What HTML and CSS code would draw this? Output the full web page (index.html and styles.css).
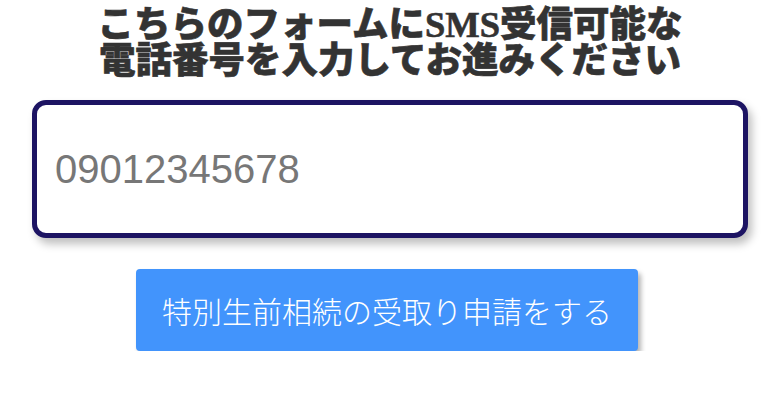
FILE: index.html
```html
<!DOCTYPE html>
<html lang="ja">
  <head>
    <meta charset="UTF-8" />
    <title>SMS認証</title>
    <meta name="viewport" content="width=device-width, initial-scale=1.0" />
    <link rel="stylesheet" href="styles.css">
  </head>
  <body>
    <h1 class="title">こちらのフォームにSMS受信可能な<br />電話番号を入力してお進みください</h1>

    <!-- Phone number entry -->
    <form class="sms-form">
      <input class="tel-input" type="tel" name="tel" placeholder="09012345678" />
      <button class="submit-btn" type="submit">特別生前相続の受取り申請をする</button>
    </form>
  </body>
</html>
```

FILE: styles.css
```css
/* General Styling */
body {
  margin: 0;
  padding: 7px 32px 0;
  background-color: #fff;
  font-family: "Noto Sans CJK JP", "Noto Sans", sans-serif;
}
.title {
  margin: 0;
  text-align: center;
  font-family: "Liberation Serif", "Noto Sans CJK JP", serif;
  font-weight: 900;
  font-size: 36.5px;
  line-height: 36px;
  color: #333;
  -webkit-text-stroke: 0.6px #333;
}

/* Form Styling */
.sms-form {
  display: flex;
  flex-direction: column;
  align-items: center;
  margin-top: 21px;
}
.tel-input {
  width: 100%;
  height: 138px;
  box-sizing: border-box;
  padding: 0 18px;
  border: 5px solid #1d1463;
  border-radius: 14px;
  box-shadow: 4px 6px 8px rgba(0, 0, 0, 0.25);
  font-family: "Liberation Sans", Arial, sans-serif;
  font-size: 40px;
  color: #333;
  outline: none;
}
.tel-input::placeholder {
  color: #777;
}
.submit-btn {
  margin: 31px 6px 0 0;
  width: 502px;
  height: 82px;
  background-color: #4294fc;
  color: #fff;
  border: none;
  border-radius: 4px;
  box-shadow: 3px 4px 5px rgba(0, 0, 0, 0.3);
  font-family: "Noto Sans CJK JP", sans-serif;
  font-weight: 300;
  font-size: 30px;
  cursor: pointer;
}
```
